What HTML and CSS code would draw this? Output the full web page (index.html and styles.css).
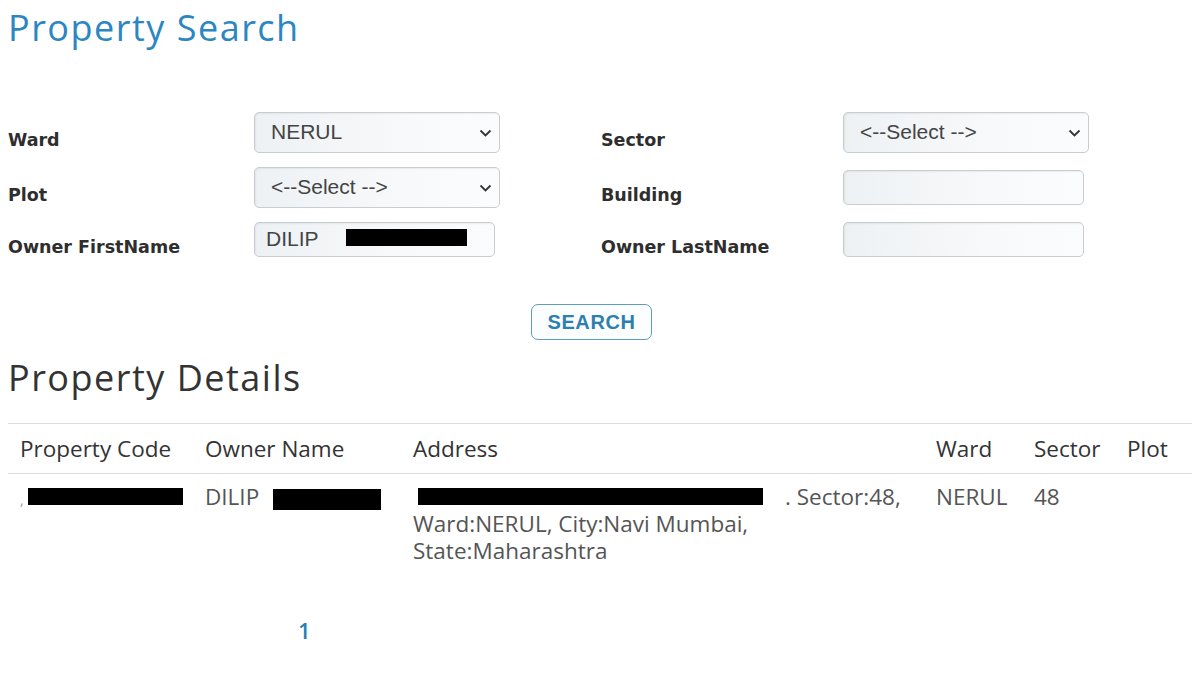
FILE: index.html
```html
<!DOCTYPE html>
<html lang="en">
<head>
    <meta charset="UTF-8">
    <meta name="viewport" content="width=device-width, initial-scale=1.0">
    <title>Property Search</title>
    <link rel="stylesheet" href="styles.css">
</head>
<body>

    <main class="page">
        <h1 class="page-title">Property Search</h1>

        <form class="search-form">
            <!-- Row 1 -->
            <label class="field-label" for="ward">Ward</label>
            <div class="select-wrap">
                <select id="ward" class="field-select"><option>NERUL</option></select>
                <svg class="chevron" width="13" height="8" viewBox="0 0 13 8"><path d="M1.5 1.5l5 5 5-5"/></svg>
            </div>
            <label class="field-label" for="sector">Sector</label>
            <div class="select-wrap">
                <select id="sector" class="field-select"><option>&lt;--Select --&gt;</option></select>
                <svg class="chevron" width="13" height="8" viewBox="0 0 13 8"><path d="M1.5 1.5l5 5 5-5"/></svg>
            </div>

            <!-- Row 2 -->
            <label class="field-label" for="plot">Plot</label>
            <div class="select-wrap">
                <select id="plot" class="field-select"><option>&lt;--Select --&gt;</option></select>
                <svg class="chevron" width="13" height="8" viewBox="0 0 13 8"><path d="M1.5 1.5l5 5 5-5"/></svg>
            </div>
            <label class="field-label" for="building">Building</label>
            <input id="building" class="field-input" type="text">

            <!-- Row 3 -->
            <label class="field-label" for="first-name">Owner FirstName</label>
            <div class="input-wrap">
                <input id="first-name" class="field-input" type="text" value="DILIP">
                <span class="redact redact-input"></span>
            </div>
            <label class="field-label" for="last-name">Owner LastName</label>
            <input id="last-name" class="field-input" type="text">
        </form>

        <div class="search-row">
            <button type="button" class="search-button">SEARCH</button>
        </div>

        <h2 class="section-title">Property Details</h2>

        <table class="details-table">
            <colgroup>
                <col style="width:185px">
                <col style="width:208px">
                <col style="width:523px">
                <col style="width:98px">
                <col style="width:93px">
                <col style="width:77px">
            </colgroup>
            <thead>
                <tr>
                    <th>Property Code</th>
                    <th>Owner Name</th>
                    <th>Address</th>
                    <th>Ward</th>
                    <th>Sector</th>
                    <th>Plot</th>
                </tr>
            </thead>
            <tbody>
                <tr>
                    <td class="nowrap"><span class="tick">,</span><span class="redact redact-code"></span></td>
                    <td class="nowrap">DILIP<span class="redact redact-name"></span></td>
                    <td><span class="redact redact-address"></span>. Sector:48, Ward:NERUL, City:Navi Mumbai, State:Maharashtra</td>
                    <td>NERUL</td>
                    <td>48</td>
                    <td></td>
                </tr>
            </tbody>
        </table>

        <div class="pager">
            <a href="#">1</a>
        </div>
    </main>

</body>
</html>
```

FILE: styles.css
```css
:root {
    --blue: #2b86c1;
    --text-color: #333333;
    --muted: #555555;
    --border-color: #dddddd;
    --field-border: #c9cdd1;
}
body {
    margin: 0;
    background: #ffffff;
    color: var(--text-color);
    font-family: 'Open Sans', sans-serif;
}
.page {
    padding: 7px 8px 0;
}

/* Titles */
.page-title, .section-title {
    margin: 0;
    font-size: 36px;
    line-height: 42px;
    font-weight: 400;
    letter-spacing: 1.5px;
}
.page-title { color: var(--blue); }
.section-title { color: var(--text-color); margin-top: 17px; }

/* Search form */
.search-form {
    margin-top: 63px;
    display: grid;
    grid-template-columns: 246px 347px 242px 246px;
    row-gap: 14px;
    align-items: center;
}
.field-label {
    font-family: 'DejaVu Sans', Verdana, sans-serif;
    font-weight: 700;
    font-size: 17.5px;
    line-height: 20px;
    color: #2e2e2e;
    padding-top: 14px;
}
.select-wrap, .input-wrap {
    position: relative;
    width: 246px;
}
.input-wrap { width: 241px; }
.field-select, .field-input {
    box-sizing: border-box;
    font-family: 'Liberation Sans', Arial, sans-serif;
    font-size: 21px;
    color: #444;
    border: 1px solid var(--field-border);
    border-radius: 5px;
    background: linear-gradient(to right, #eef1f4, #f7f9fa 60%, #fbfcfd);
    box-shadow: inset 1px 1px 2px rgba(0, 0, 0, 0.06);
    outline: none;
    margin: 0;
}
.field-select {
    appearance: none;
    -webkit-appearance: none;
    width: 246px;
    height: 41px;
    padding: 0 30px 3px 16px;
}
.field-input {
    width: 241px;
    height: 35px;
    padding: 0 10px 2px 11px;
}
.chevron {
    position: absolute;
    right: 8px;
    top: 17px;
    fill: none;
    stroke: #333;
    stroke-width: 1.8;
    pointer-events: none;
}

/* Redactions */
.redact {
    display: inline-block;
    background: #000;
}
.redact-input {
    position: absolute;
    left: 92px;
    top: 7px;
    width: 121px;
    height: 17px;
}
.redact-code { width: 155px; height: 17px; margin-left: 4px; }
.redact-name { width: 108px; height: 21px; margin-left: 14px; vertical-align: -5px; }
.redact-address { width: 345px; height: 17px; margin-left: 5px; margin-right: 22px; }
.tick { color: #999; font-size: 14px; }
.nowrap { white-space: nowrap; }

/* Search button */
.search-row {
    margin-top: 47px;
    text-align: center;
    padding-right: 17px;
}
.search-button {
    width: 121px;
    height: 36px;
    border: 1px solid #5f9dbf;
    border-radius: 7px;
    background: #fbfdfe;
    color: #2d7fb0;
    font-family: 'Liberation Sans', Arial, sans-serif;
    font-weight: 700;
    font-size: 20px;
    letter-spacing: 0.6px;
    cursor: pointer;
    padding: 0;
}

/* Results table */
.details-table {
    margin-top: 24px;
    width: 100%;
    border-collapse: collapse;
    table-layout: fixed;
    border-top: 1px solid var(--border-color);
    font-size: 22.5px;
}
.details-table th {
    text-align: left;
    font-weight: 400;
    color: var(--text-color);
    padding: 11px 12px 10px;
    line-height: 28px;
    border-bottom: 1px solid var(--border-color);
}
.details-table td {
    color: var(--muted);
    padding: 9px 12px 11px;
    line-height: 27px;
    vertical-align: top;
}

/* Pager */
.pager {
    margin-top: 40px;
    padding-left: 290px;
}
.pager a {
    color: #2a7fb5;
    font-size: 22px;
    font-weight: 600;
    text-decoration: none;
}
```
